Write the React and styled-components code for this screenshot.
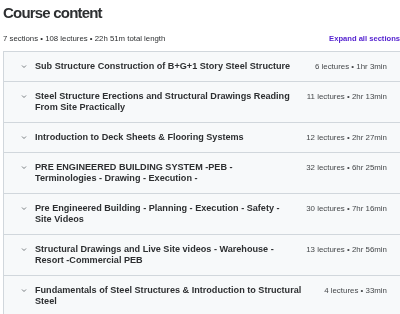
import React from 'react'
import styled, { createGlobalStyle } from 'styled-components'

const SECTIONS = [
  { title: 'Sub Structure Construction of B+G+1 Story Steel Structure', meta: '6 lectures • 1hr 3min' },
  { title: 'Steel Structure Erections and Structural Drawings Reading From Site Practically', meta: '11 lectures • 2hr 13min' },
  { title: 'Introduction to Deck Sheets & Flooring Systems', meta: '12 lectures • 2hr 27min' },
  { title: 'PRE ENGINEERED BUILDING SYSTEM -PEB - Terminologies - Drawing - Execution -', meta: '32 lectures • 6hr 25min' },
  { title: 'Pre Engineered Building - Planning - Execution - Safety - Site Videos', meta: '30 lectures • 7hr 16min' },
  { title: 'Structural Drawings and Live Site videos - Warehouse - Resort -Commercial PEB', meta: '13 lectures • 2hr 56min' },
  { title: 'Fundamentals of Steel Structures & Introduction to Structural Steel', meta: '4 lectures • 33min' },
]

const Global = createGlobalStyle`
  body {
    margin: 0;
    overflow: hidden;
    background: #fff;
    font-family: "Liberation Sans", Arial, sans-serif;
    color: #2d2f31;
  }
`

const Page = styled.div`
  padding: 4px 0 0 3px;
  will-change: transform;
  background: #fff;
`

const Heading = styled.h2`
  margin: 0;
  font-size: 15px;
  line-height: 18px;
  font-weight: 700;
  letter-spacing: -0.8px;
`

const Summary = styled.div`
  display: flex;
  justify-content: space-between;
  align-items: baseline;
  margin-top: 12px;
  line-height: 10px;
`

const Stats = styled.span`
  font-size: 7.8px;
`

const ExpandLink = styled.button`
  border: 0;
  background: none;
  padding: 0;
  font-family: inherit;
  font-size: 7.6px;
  font-weight: 700;
  color: #5624d0;
`

const List = styled.div`
  margin-top: 7px;
  margin-right: -2px;
  border: 1px solid #d1d7dc;
`

const Row = styled.div`
  display: flex;
  align-items: flex-start;
  gap: 15px;
  padding: 9px 14px 9px 17px;
  background: #f7f9fa;
  border-top: ${p => (p.first ? 'none' : '1px solid #d1d7dc')};
`

const Chevron = styled.svg`
  flex: none;
  width: 6px;
  height: 11px;
  margin-right: -7px;
  color: #6a6f73;
`

const Title = styled.div`
  flex: 1;
  font-size: 9.1px;
  line-height: 11px;
  font-weight: 700;
  color: #2d2f31;
`

const Meta = styled.div`
  flex: none;
  font-size: 7.9px;
  line-height: 11px;
  color: #45484a;
`

export default function App() {
  return (
    <Page>
      <Global />
      <Heading>Course content</Heading>
      <Summary>
        <Stats>7 sections • 108 lectures • 22h 51m total length</Stats>
        <ExpandLink>Expand all sections</ExpandLink>
      </Summary>
      <List>
        {SECTIONS.map((s, i) => (
          <Row key={i} first={i === 0}>
            <Chevron viewBox="0 0 6 11">
              <path d="M1 4.5 L3 6.5 L5 4.5" fill="none" stroke="currentColor" strokeWidth="0.9" />
            </Chevron>
            <Title>{s.title}</Title>
            <Meta>{s.meta}</Meta>
          </Row>
        ))}
      </List>
    </Page>
  )
}
